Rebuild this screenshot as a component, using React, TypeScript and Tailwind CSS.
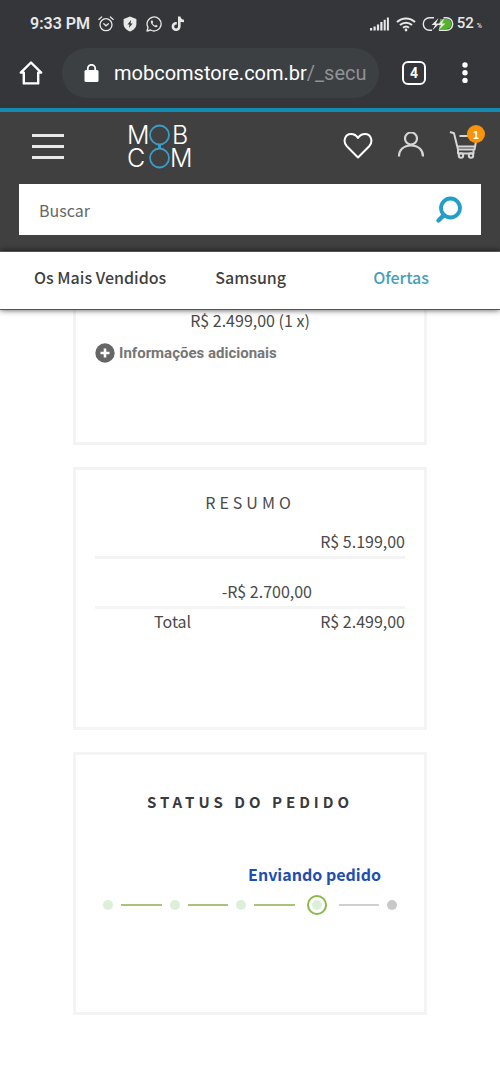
import { Fragment, ReactNode } from 'react';
import { clsx } from 'clsx';

const navLinks = [
  { label: 'Os Mais Vendidos', href: '#mais-vendidos', active: false },
  { label: 'Samsung', href: '#samsung', active: false },
  { label: 'Ofertas', href: '#ofertas', active: true },
];

const steps = ['done', 'done', 'done', 'current', 'pending'];

function StatusBar() {
  return (
    <div className="flex h-12 items-center justify-between pl-[30px] pr-[18px] text-[#e8e8e8]">
      <div className="flex items-center gap-2">
        <span className="text-base font-semibold">9:33 PM</span>
        {/* Alarm */}
        <svg className="h-4 w-4" viewBox="0 0 16 16" fill="none" stroke="currentColor" strokeWidth="1.3" strokeLinecap="round">
          <circle cx="8" cy="8.7" r="6" />
          <path d="M.8 3.4 3.6 1M15.2 3.4 12.4 1M5.8 7.8 8 9.8l2.4-2" />
        </svg>
        {/* Shield */}
        <svg className="h-4 w-4" viewBox="0 0 16 16">
          <path d="M8 .5 14.4 3v5c0 3.600-2.800 6-6.400 7.600C4.400 14 1.600 11.600 1.600 8V3z" fill="currentColor" />
          <path d="M9 4 5.500 8.600h2L7 12l3.600-4.600h-2z" fill="#35363a" />
        </svg>
        {/* WhatsApp */}
        <svg className="h-4 w-4" viewBox="0 0 16 16" fill="none" stroke="currentColor" strokeWidth="1.300">
          <path d="M1 15l1-3.600A7 7 0 1 1 4.600 14z" strokeLinejoin="round" />
          <path d="M5.400 4.400c-1 .7-.8 2.200.6 4s3.400 3.200 4.700 2.700c.8-.3 1-1 .9-1.400L10 8.800l-.9.9C8 9.300 7 8.200 6.500 7.200l.7-.9-.7-1.900z" fill="currentColor" stroke="none" />
        </svg>
        {/* TikTok */}
        <svg className="h-4 w-4" viewBox="0 0 16 16" fill="none" stroke="currentColor" strokeWidth="2.600">
          <path d="M9.300.5v10a3.200 3.200 0 1 1-3.200-3.200h.7M9.300 1c.3 2.400 2 3.900 4.700 4" />
        </svg>
      </div>
      <div className="flex items-center">
        <svg className="h-4 w-5" viewBox="0 0 20 16" fill="currentColor">
          <path d="M0 12h2.200v2.500H0zM3.500 10.500h2.200v4H3.500zM6.900 8.500h2.200v6H6.900zM10.300 6h2.200v8.500h-2.200zM13.700 3.800h2v10.700h-2zM16.900 1.500h2v13h-2z" />
        </svg>
        <svg className="mx-[6px] h-4 w-5" viewBox="0 0 20 16" fill="none" stroke="currentColor" strokeWidth="2">
          <path d="M1 6a13 13 0 0 1 18 0M4 9a8.800 8.800 0 0 1 12 0M7 11.800a4.600 4.600 0 0 1 6 0" />
          <circle cx="10" cy="14" r="1.400" fill="currentColor" stroke="none" />
        </svg>
        <svg className="h-4 w-8" viewBox="0 0 32 16">
          <path d="M18 3h6.500a5 5 0 0 1 0 10H17z" fill="#52b52b" />
          <path d="M12 1.800H7.500a6.200 6.200 0 0 0 0 12.400H10M21.500 1.800h3a6.200 6.200 0 0 1 0 12.400H17" fill="none" stroke="currentColor" strokeWidth="1.400" />
          <path d="M16.500 2 9.500 9h3.700l-3 5.500L17.500 7.500H14zM22.500 2l-7 7h3.700l-3 5.500L23.500 7.500H20z" fill="currentColor" />
        </svg>
        <span className="ml-[3px] text-[15px] leading-5 font-medium">
          52<span className="ml-[3px] text-[7px]">%</span>
        </span>
      </div>
    </div>
  );
}

function BrowserBar() {
  return (
    <div className="flex h-[60px] items-start gap-[18px] px-[18px]">
      <button aria-label="Home" className="mt-3 text-white">
        <svg className="h-[26px] w-[26px]" viewBox="0 0 26 26" fill="none" stroke="currentColor" strokeWidth="2.400" strokeLinejoin="round">
          <path d="M13 2.500 2.800 12.600h3V23.400h14.400V12.600h3z" />
        </svg>
      </button>
      <button className="flex h-[50px] min-w-0 flex-1 items-center gap-[15px] rounded-full bg-[#3c4043] pr-3 pl-[22px] text-left">
        <svg className="h-[18px] w-[15px] shrink-0 text-white" viewBox="0 0 15 18">
          <rect x="0.500" y="6" width="14" height="12" rx="1.500" fill="currentColor" />
          <path d="M3.800 7V4.500a3.700 3.700 0 0 1 7.400 0V7" fill="none" stroke="currentColor" strokeWidth="1.800" />
        </svg>
        <span className="overflow-hidden text-xl whitespace-nowrap text-white">
          mobcomstore.com.br<span className="text-[#8f9296]">/_secure</span>
        </span>
      </button>
      <div className="flex items-center gap-[26px] pt-3 pl-[5px]">
        <button aria-label="Abas" className="flex h-6 w-6 items-center justify-center rounded-md border-[2px] border-white text-sm font-bold text-white">
          4
        </button>
        <button aria-label="Menu" className="mr-1 text-white">
          <svg className="h-[26px] w-[26px]" viewBox="0 0 26 26" fill="currentColor">
            <circle cx="13" cy="5" r="2.700" />
            <circle cx="13" cy="12.700" r="2.700" />
            <circle cx="13" cy="20.400" r="2.700" />
          </svg>
        </button>
      </div>
    </div>
  );
}

function Logo() {
  return (
    <a href="#inicio" aria-label="MOBCOM">
      <svg className="h-[68px] w-[72px]" viewBox="0 0 72 68">
        <g fill="#fff" className="font-[Inter,sans-serif] text-[25px] font-light">
          <text x="3" y="32">M</text>
          <text x="48" y="32">B</text>
          <text x="3" y="55">C</text>
          <text x="46" y="55">M</text>
        </g>
        <g fill="none" stroke="#3b9cc5" strokeWidth="1.800">
          <circle cx="35.500" cy="23" r="9.500" />
          <circle cx="35.500" cy="46" r="9.500" />
          <path d="M35.500 32v5" strokeWidth="3" />
        </g>
      </svg>
    </a>
  );
}

function StoreHeader() {
  return (
    <header className="border-t-4 border-[#138bb0] bg-[#404040] px-[19px] pb-4">
      <div className="flex h-[72px] items-center pb-1">
        <button aria-label="Abrir menu" className="ml-[13px] flex w-8 flex-col gap-2">
          <span className="h-[3px] w-full bg-[#e8e8e8]" />
          <span className="h-[3px] w-full bg-[#e8e8e8]" />
          <span className="h-[3px] w-full bg-[#e8e8e8]" />
        </button>
        <div className="ml-[60px]">
          <Logo />
        </div>
        <div className="ml-auto flex items-center gap-6">
          <button aria-label="Favoritos">
            <svg className="h-7 w-[30px]" viewBox="0 0 30 28" fill="none" stroke="#fff" strokeWidth="2" strokeLinejoin="round">
              <path d="M15 25.500 3.800 14.300C-.2 10 1.500 2 8 2c3.300 0 5.500 1.600 7 4C16.500 3.600 18.700 2 22 2c6.500 0 8.200 8 4.200 12.300z" />
            </svg>
          </button>
          <button aria-label="Minha conta">
            <svg className="h-7 w-7" viewBox="0 0 28 28" fill="none" stroke="#d6d6d6" strokeWidth="2.200">
              <circle cx="14" cy="6.500" r="6" />
              <path d="M2 24.500c0-6.500 4.500-11 12-11s12 4.500 12 11" />
            </svg>
          </button>
          <button aria-label="Carrinho" className="relative">
            <svg className="h-[30px] w-8" viewBox="0 0 32 30" fill="none" stroke="#d6d6d6" strokeWidth="2" strokeLinejoin="round">
              <path d="M1 1l4 1.300L9 18.500v4h15.500v-4M10.500 5H28L25.500 18.500H9M8.500 15.500h17" />
              <circle cx="12" cy="24.500" r="2.200" />
              <circle cx="22" cy="24.500" r="2.200" />
            </svg>
            <span className="absolute -top-[6px] -right-1 flex h-[18px] w-[18px] items-center justify-center rounded-full bg-[#f7930c] text-[11px] font-bold text-white">
              1
            </span>
          </button>
        </div>
      </div>
      <form className="flex h-[51px] items-center bg-white pr-[18px]" onSubmit={(e) => e.preventDefault()}>
        <input
          type="text"
          aria-label="Buscar"
          placeholder="Buscar"
          className="h-full min-w-0 flex-1 bg-transparent px-5 text-base text-[#555] outline-none placeholder:text-[#666]"
        />
        <button aria-label="Pesquisar">
          <svg className="h-7 w-7" viewBox="0 0 28 28" fill="none" stroke="#219fc8" strokeLinecap="round">
            <circle cx="15.500" cy="12" r="9.500" strokeWidth="3.800" />
            <path d="M8.500 19.500 3.500 24.500" strokeWidth="4.400" />
          </svg>
        </button>
      </form>
    </header>
  );
}

function NavBar() {
  return (
    <nav className="relative z-10 flex h-[59px] items-center border-y border-[#555] bg-white pr-[71px] pb-2 pl-[34px] shadow-[0_0_6px_rgba(0,0,0,0.7)]">
      {navLinks.map((link) => (
        <a
          key={link.label}
          href={link.href}
          className={clsx(
            'mr-[49px] text-base font-medium last:mr-0 last:ml-auto',
            link.active ? 'text-[#45a0be]' : 'text-[#3f3f3f]'
          )}
        >
          {link.label}
        </a>
      ))}
    </nav>
  );
}

function Card({ children, className }: { children: ReactNode; className?: string }) {
  return (
    <section className={clsx('border-[3px] border-[#f4f4f4] px-[19px]', className)}>
      {children}
    </section>
  );
}

function Progress() {
  return (
    <div className="flex h-5 items-center px-2">
      {steps.map((step, i) => (
        <Fragment key={i}>
          {i > 0 && (
            <span className={clsx('mx-2 h-[2px] flex-1', step === 'pending' ? 'bg-[#d0d0d0]' : 'bg-[#a9c37a]')} />
          )}
          {step === 'current' ? (
            <span className="mx-1 flex h-5 w-5 items-center justify-center rounded-full border-2 border-[#8bb84a]">
              <span className="h-[10px] w-[10px] rounded-full bg-[#dcefd8]" />
            </span>
          ) : (
            <span className={clsx('h-[10px] w-[10px] rounded-full', step === 'done' ? 'bg-[#dcefd8]' : 'bg-[#c8c8c8]')} />
          )}
        </Fragment>
      ))}
    </div>
  );
}

export default function App() {
  return (
    <div className="min-h-screen bg-white font-['Noto_Sans_CJK_JP','Noto_Sans_CJK_SC',sans-serif] text-base leading-6 text-[#4a4a4a]">
      <div className="bg-[#35363a] font-[Roboto,sans-serif]">
        <StatusBar />
        <BrowserBar />
      </div>
      <StoreHeader />
      <NavBar />

      <main className="flex flex-col gap-[22px] px-[73px] pb-16">
        <Card className="min-h-[135px] border-t-0">
          <p className="text-center leading-5">R$ 2.499,00 (1 x)</p>
          <button className="mt-[11px] flex items-center gap-1 font-[Roboto,sans-serif] text-[15px] leading-6 font-bold text-[#767676]">
            <svg className="h-5 w-5" viewBox="0 0 20 20">
              <circle cx="10" cy="10" r="9.700" fill="#666" />
              <path d="M10 5.500v9M5.500 10h9" stroke="#fff" strokeWidth="2.600" />
            </svg>
            Informações adicionais
          </button>
        </Card>

        <Card className="min-h-[263px] pt-5">
          <h2 className="text-center tracking-[4px]">RESUMO</h2>
          <table className="mt-3 w-full table-fixed border-collapse text-right">
            <tbody>
              <tr className="border-b-[3px] border-[#f4f4f4]">
                <td className="w-[31%]"></td>
                <td className="w-[39%]"></td>
                <td className="pt-[3px] pb-[3px]">R$ 5.199,00</td>
              </tr>
              <tr className="border-b-[3px] border-[#f4f4f4]">
                <td></td>
                <td className="pt-5 pb-[3px]">-R$ 2.700,00</td>
                <td></td>
              </tr>
              <tr>
                <td>Total</td>
                <td></td>
                <td>R$ 2.499,00</td>
              </tr>
            </tbody>
          </table>
        </Card>

        <Card className="min-h-[263px] pt-[35px]">
          <h2 className="text-center text-[15px] font-bold tracking-[4px] text-[#3a3a3a]">STATUS DO PEDIDO</h2>
          <p className="mt-12 pr-6 text-right font-bold text-[#1d4fb4]">Enviando pedido</p>
          <div className="mt-[9px]">
            <Progress />
          </div>
        </Card>
      </main>
    </div>
  );
}
